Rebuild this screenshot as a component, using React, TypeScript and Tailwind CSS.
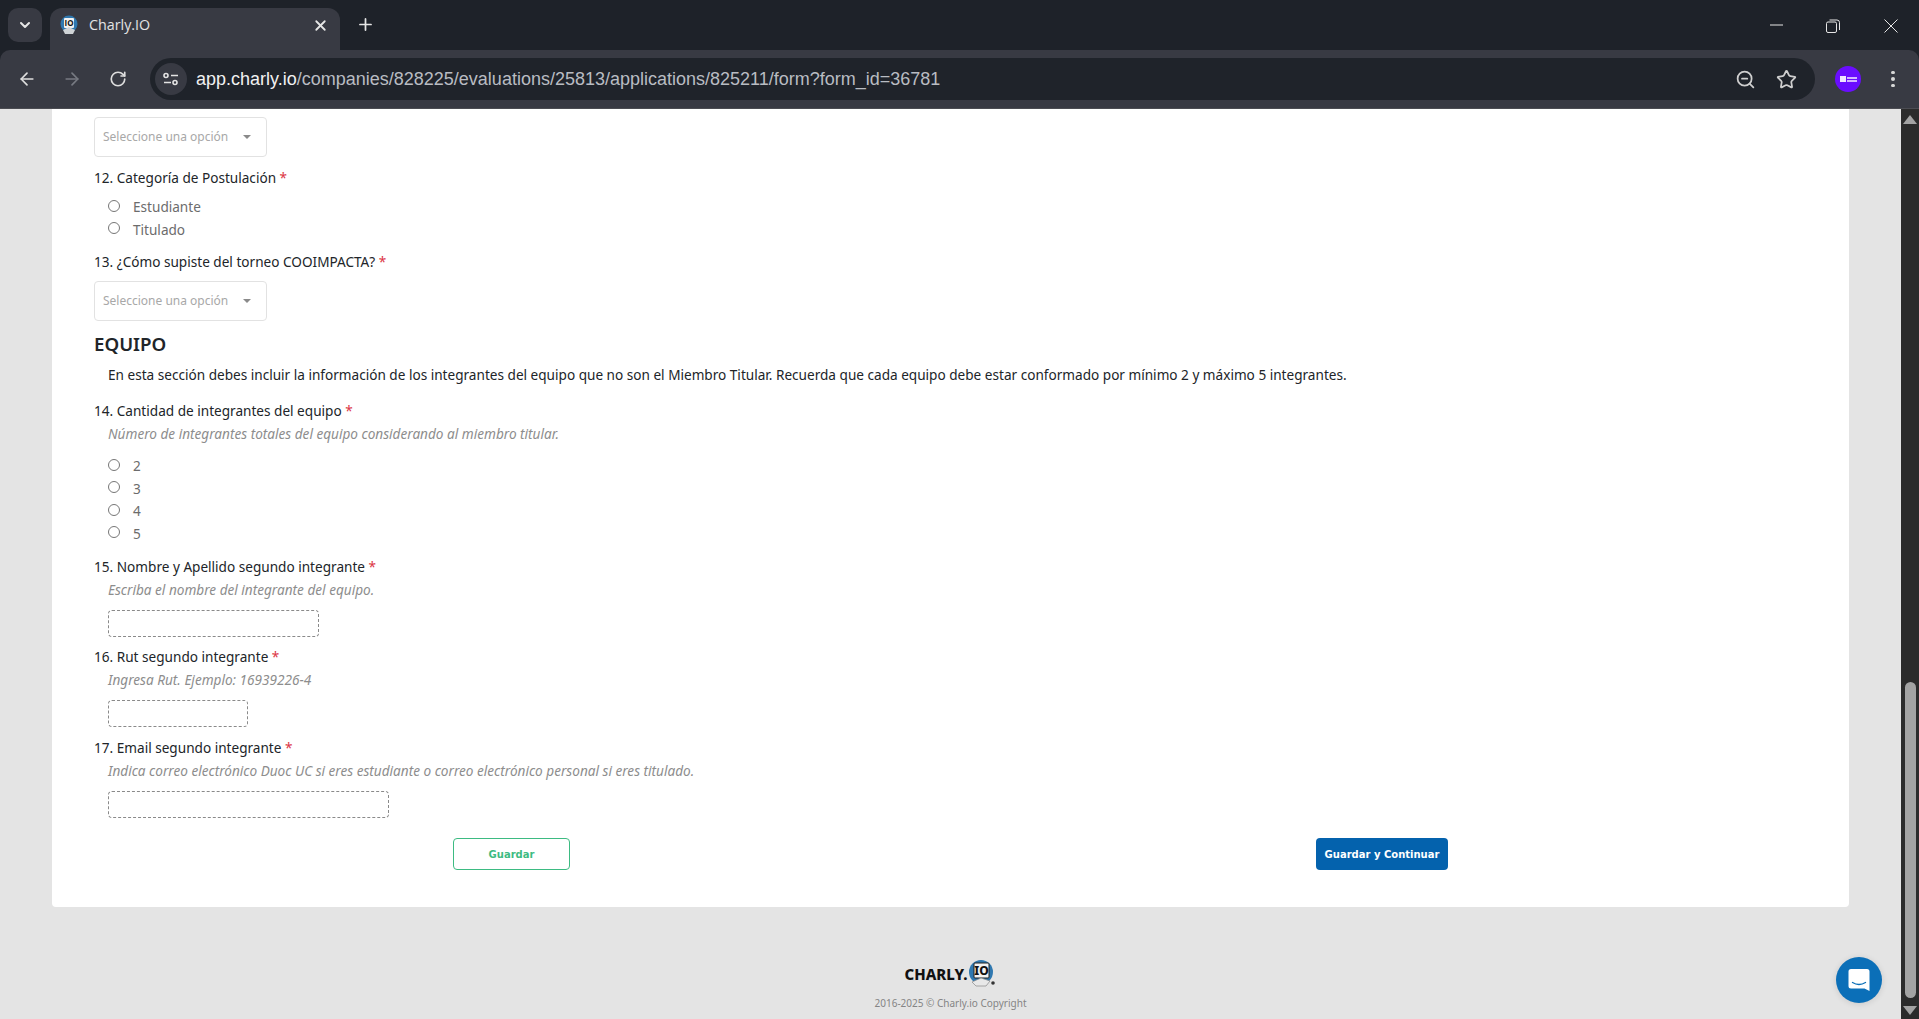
import React from 'react';
import { ArrowLeft, ArrowRight, ChevronDown, Plus, RotateCw, Star, X, ZoomOut } from 'lucide-react';

const pageFont = "font-['Noto_Sans',sans-serif]";

function Label({ n, text, className = '' }: { n: number; text: string; className?: string }) {
  return (
    <div className={`h-[22px] text-[13.6px] leading-[22px] text-[#212529] ${className}`}>
      {n}. {text} <span className="text-[#dc3545]">*</span>
    </div>
  );
}

function Hint({ text }: { text: string }) {
  return <div className="mt-px ml-[14px] h-[22px] text-[13.6px] italic leading-[22px] text-[#8d8d8d]">{text}</div>;
}

function SelectBox({ className = '' }: { className?: string }) {
  return (
    <div className={`flex h-10 w-[173px] items-center rounded border border-[#e2e2e2] bg-white pl-2 text-[12px] text-[#a8a8a8] ${className}`}>
      <span>Seleccione una opción</span>
      <span className="ml-[15px] h-0 w-0 border-x-[4px] border-t-[4px] border-x-transparent border-t-[#8a8a8a]" />
    </div>
  );
}

function Radio({ label }: { label: string }) {
  return (
    <label className="flex h-[22.5px] items-center pl-[14px] text-[13.6px] text-[#6c6c6c]">
      <input type="radio" name={label} className="mb-[3px] h-[12px] w-[12px]" />
      <span className="ml-[13px]">{label}</span>
    </label>
  );
}

function DashedInput({ width, className = '' }: { width: string; className?: string }) {
  return <div className={`ml-[14px] h-[27px] rounded-sm border border-dashed border-[#8a8a8a] ${width} ${className}`} />;
}

function BrowserChrome() {
  return (
    <header className="shrink-0 bg-[#1e2229] font-['Open_Sans',sans-serif]">
      <div className="flex h-[50px] items-end pl-2">
        <div className="mb-2 flex h-[34px] w-[34px] items-center justify-center rounded-[10px] bg-[#383a43] text-[#e6e6e6]">
          <ChevronDown size={16} strokeWidth={3} />
        </div>
        <div className="ml-2 flex h-[42px] w-[290px] items-center rounded-t-[12px] bg-[#383a43] pb-2 pl-[10px] pr-[11px]">
          <svg width="18" height="20" viewBox="0 0 18 20">
            <circle cx="9" cy="9" r="8.5" fill="#2f78b0" />
            <rect x="4" y="3" width="10" height="10" rx="1" fill="#f2f2f2" />
            <text x="9" y="11" textAnchor="middle" fontSize="8" fontWeight="700" fill="#111">IO</text>
            <path d="M3 15l6-3 6 3-2 4H5z" fill="#cfd3d6" />
          </svg>
          <span className="ml-[11px] text-[14.3px] text-[#e3e3e3]">Charly.IO</span>
          <X size={17} strokeWidth={2.5} className="ml-auto text-[#e6e6e6]" />
        </div>
        <Plus size={19} strokeWidth={2.2} className="mb-[16px] ml-[16px] text-[#e6e6e6]" />
        <div className="mb-[17px] ml-auto flex items-center pr-[21px] text-[#e6e6e6]">
          <svg width="14" height="14" viewBox="0 0 14 14" className="mr-[42px]"><path d="M0 6h13" stroke="currentColor" /></svg>
          <svg width="14" height="14" viewBox="0 0 14 14" className="mr-[44px]" fill="none" stroke="currentColor">
            <rect x="0.5" y="3" width="10" height="10.5" rx="1.5" />
            <path d="M3.5 1h7.5a2.5 2.5 0 0 1 2.5 2.5V11" />
          </svg>
          <svg width="14" height="14" viewBox="0 0 14 14" stroke="currentColor"><path d="M.5.5l13 13M13.500.5l-13 13" /></svg>
        </div>
      </div>
      <div className="flex h-[59px] items-center rounded-t-[10px] border-b border-[#4b4c52] bg-[#383a43] pl-[17px] pr-[17px]">
        <ArrowLeft size={20} className="text-[#dedede]" />
        <ArrowRight size={20} className="ml-[25px] text-[#777a82]" />
        <RotateCw size={18} strokeWidth={2.2} className="ml-[27px] text-[#dedede]" />
        <div className="ml-[23px] flex h-[42px] w-[1665px] items-center rounded-full bg-[#1f232a] pl-[5px] pr-[18px]">
          <div className="flex h-8 w-8 items-center justify-center rounded-full bg-[#383a43]">
            <svg width="18" height="14" viewBox="0 0 18 14" fill="none" stroke="#e3e3e3" strokeWidth="1.6">
              <circle cx="4" cy="3.500" r="2" />
              <path d="M9 3.500h7M2 10.500h7" />
              <circle cx="13" cy="10.500" r="2" />
            </svg>
          </div>
          <div className="ml-[9px] whitespace-nowrap font-['Liberation_Sans',sans-serif] text-[18px] text-[#b9bcc2]">
            <span className="text-[#f1f1f1]">app.charly.io</span>/companies/828225/evaluations/25813/applications/825211/form?form_id=36781
          </div>
          <ZoomOut size={21} className="ml-auto mr-[20px] text-[#cfcfcf]" />
          <Star size={21} className="text-[#cfcfcf]" />
        </div>
        <div className="ml-[20px] flex h-[26px] w-[26px] items-center justify-center gap-[1px] rounded-full bg-[#6a0dff]">
          <span className="h-[6px] w-[6px] bg-white/90" />
          <span className="flex flex-col gap-[1px]">
            <span className="h-[2px] w-[10px] bg-white/70" />
            <span className="h-[2px] w-[10px] bg-white/70" />
          </span>
        </div>
        <div className="ml-[30px] flex flex-col gap-[3px]">
          <span className="h-[3.500px] w-[3.500px] rounded-full bg-[#d8d8d8]" />
          <span className="h-[3.500px] w-[3.500px] rounded-full bg-[#d8d8d8]" />
          <span className="h-[3.500px] w-[3.500px] rounded-full bg-[#d8d8d8]" />
        </div>
      </div>
    </header>
  );
}

function FooterLogo() {
  return (
    <div className="flex h-[34px] items-center justify-center">
      <span className="text-[15px] font-extrabold leading-none text-[#111]">CHARLY.</span>
      <svg width="28" height="30" viewBox="0 0 28 30" className="ml-[1px]">
        <circle cx="13" cy="13" r="12" fill="#2f78b0" />
        <rect x="6" y="4" width="15" height="15" rx="1" fill="#f3f3f3" stroke="#222" />
        <text x="13.500" y="16" textAnchor="middle" fontSize="12" fontWeight="800" fill="#111">IO</text>
        <path d="M4 23l9-4 9 3-4 5H8z" fill="#e8e8e8" stroke="#888" strokeWidth="0.7" />
        <circle cx="25" cy="24" r="1.800" fill="#333" />
      </svg>
    </div>
  );
}

export default function App() {
  return (
    <div className="flex h-[1019px] w-[1919px] flex-col overflow-hidden bg-[#e4e4e4]">
      <BrowserChrome />
      <div className="flex min-h-0 flex-1">
        <main className={`relative w-[1901px] ${pageFont}`}>
          <section className="ml-[52px] h-[798px] w-[1797px] rounded-b bg-white pl-[42px] pt-2">
            <SelectBox />
            <Label n={12} text="Categoría de Postulación" className="mt-[10px]" />
            <div className="mt-[7px]">
              <Radio label="Estudiante" />
              <Radio label="Titulado" />
            </div>
            <Label n={13} text="¿Cómo supiste del torneo COOIMPACTA?" className="mt-[10px]" />
            <SelectBox className="mt-2" />
            <h2 className="mt-[9px] h-7 text-[18.7px] font-semibold leading-7 text-[#212529]">EQUIPO</h2>
            <p className="ml-[14px] mt-[6px] h-[22px] text-[13.6px] leading-[22px] text-[#212529]">
              En esta sección debes incluir la información de los integrantes del equipo que no son el Miembro Titular. Recuerda que cada equipo debe estar conformado por mínimo 2 y máximo 5 integrantes.
            </p>
            <Label n={14} text="Cantidad de integrantes del equipo" className="mt-[14px]" />
            <Hint text="Número de integrantes totales del equipo considerando al miembro titular." />
            <div className="mt-[10px]">
              <Radio label="2" />
              <Radio label="3" />
              <Radio label="4" />
              <Radio label="5" />
            </div>
            <Label n={15} text="Nombre y Apellido segundo integrante" className="mt-[11px]" />
            <Hint text="Escriba el nombre del integrante del equipo." />
            <DashedInput width="w-[211px]" className="mt-[9px]" />
            <Label n={16} text="Rut segundo integrante" className="mt-[9px]" />
            <Hint text="Ingresa Rut. Ejemplo: 16939226-4" />
            <DashedInput width="w-[140px]" className="mt-[9px]" />
            <Label n={17} text="Email segundo integrante" className="mt-[10px]" />
            <Hint text="Indica correo electrónico Duoc UC si eres estudiante o correo electrónico personal si eres titulado." />
            <DashedInput width="w-[281px]" className="mt-[9px]" />
            <div className="ml-[359px] mt-[20px] flex font-['DejaVu_Sans',sans-serif] text-[10px] font-bold">
              <button className="h-8 w-[117px] rounded-sm border border-[#3dbb82] bg-white text-[#3dbb82]">Guardar</button>
              <button className="ml-[746px] h-8 w-[132px] rounded-sm bg-[#0462ad] text-white">Guardar y Continuar</button>
            </div>
          </section>
          <footer className="mt-[50px]">
            <FooterLogo />
            <div className="mt-[5px] text-center text-[10px] leading-[14px] text-[#858585]">2016-2025 © Charly.io Copyright</div>
          </footer>
          <button className="absolute right-[19px] top-[848px] flex h-[46px] w-[46px] items-center justify-center rounded-full bg-[#0b6fb8] shadow-[0_1px_6px_rgba(0,0,0,0.12)]">
            <svg width="22" height="24" viewBox="0 0 22 24">
              <path d="M3 1h16a2.500 2.500 0 0 1 2.500 2.500V23l-5-2.500H3A2.500 2.500 0 0 1 .5 18V3.500A2.500 2.500 0 0 1 3 1z" fill="#fff" />
              <path d="M4.500 14.500c4 2.500 9 2.500 13 0" fill="none" stroke="#0b6fb8" strokeWidth="1.400" strokeLinecap="round" />
            </svg>
          </button>
        </main>
        <aside className="flex w-[18px] flex-col items-center bg-[#2b2b2b] pt-[6px]">
          <span className="h-0 w-0 border-x-[7px] border-b-[9px] border-x-transparent border-b-[#a3a3a3]" />
          <span className="mt-[558px] h-[316px] w-[11px] rounded-full bg-[#a3a3a3]" />
          <span className="mt-2 h-0 w-0 border-x-[7px] border-t-[9px] border-x-transparent border-t-[#a3a3a3]" />
        </aside>
      </div>
    </div>
  );
}
